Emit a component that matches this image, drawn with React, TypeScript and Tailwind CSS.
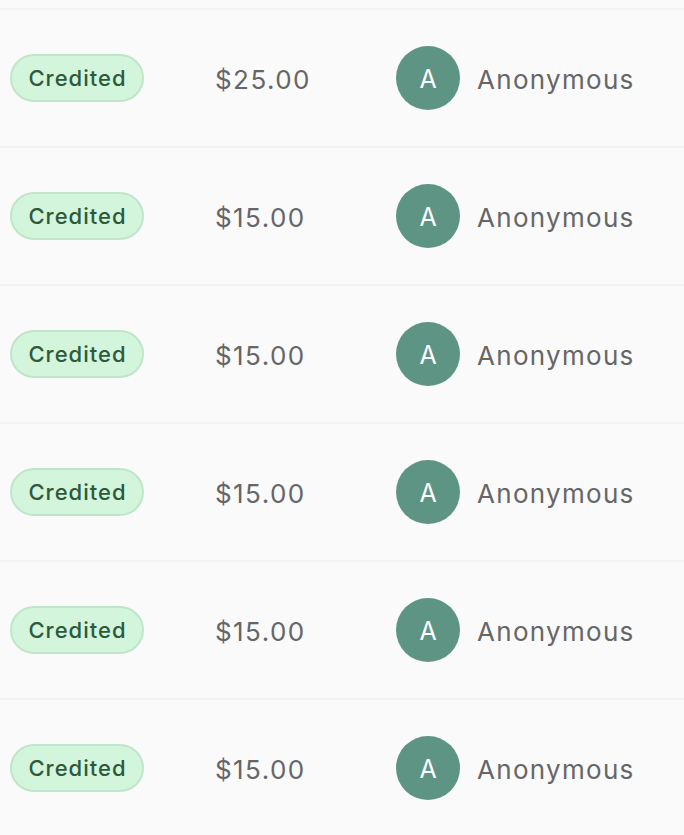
const rows = ["$25.00", "$15.00", "$15.00", "$15.00", "$15.00", "$15.00"];

function Row({ amount }: { amount: string }) {
  return (
    <div className="flex h-[138px] items-center border-t-2 border-[#f3f3f3] pl-[10px]">
      <div className="w-[205px] shrink-0">
        <span className="inline-flex h-[48px] w-[134px] items-center justify-center rounded-full border-2 border-[#bfe6c9] bg-[#d3f5dc] pl-[1px] pt-[1px] text-[22px] font-medium tracking-[0.045em] text-[#2d5a3c]">
          Credited
        </span>
      </div>
      <div className="w-[181px] shrink-0 pt-[2px] text-[26px] tracking-[0.055em] text-[#666666]">{amount}</div>
      <div className="flex items-center gap-[17px]">
        <div className="flex size-[64px] items-center justify-center rounded-full bg-[#5e9484] pt-[3px] text-[25px] text-white">
          A
        </div>
        <span className="pt-[2px] text-[26px] tracking-[0.05em] text-[#666666]">Anonymous</span>
      </div>
    </div>
  );
}

export default function App() {
  return (
    <div className="h-[835px] overflow-hidden bg-[#fafafa] pt-[8px] font-['Inter',sans-serif]">
      {rows.map((a, i) => (
        <Row key={i} amount={a} />
      ))}
    </div>
  );
}
